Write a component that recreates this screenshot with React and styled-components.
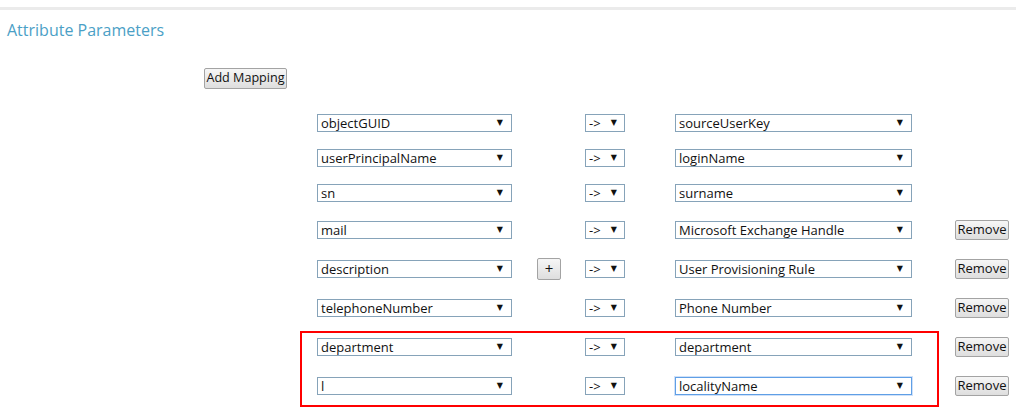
import React from "react";
import styled, { createGlobalStyle, css } from "styled-components";

const Global = createGlobalStyle`
  html, body { margin: 0; padding: 0; background: #fff; }
  body { font-family: "Open Sans", "Noto Sans", "Liberation Sans", sans-serif; color: #222; }
`;

const Page = styled.div`
  width: 1022px;
  height: 416px;
  overflow: hidden;
  padding-top: 7px;
  box-sizing: border-box;
`;

const TopRule = styled.div`
  height: 3px;
  width: 1016px;
  background: #ebebeb;
`;

const Title = styled.h2`
  margin: 10px 0 0 7px;
  font-size: 16px;
  line-height: 20px;
  font-weight: 400;
  color: #4b9fc6;
`;

const Toolbar = styled.div`
  margin: 28px 0 0 204px;
  height: 21px;
  display: flex;
`;

const Button = styled.button`
  font-family: "Open Sans", "Noto Sans", sans-serif;
  font-size: ${p => p.$fs || 13}px;
  color: #111;
  background: linear-gradient(#f6f6f6, #dedede);
  border: 1px solid #a3a3a3;
  border-radius: 2px;
  padding: 0;
  white-space: nowrap;
  height: ${p => p.$h || 20}px;
  width: ${p => p.$w}px;
  line-height: 1;
  cursor: pointer;
  box-sizing: border-box;
`;

const Table = styled.div`
  margin: 16px 0 0 300px;
  display: flex;
  flex-direction: column;
`;

const Row = styled.div`
  display: grid;
  grid-template-columns: 220px 48px 90px 280px 54px;
  align-items: center;
  padding-left: 17px;
  height: ${p => (p.$tall ? 39 : 35)}px;
`;

const Group = styled.div`
  position: relative;
`;

const Highlight = styled.div`
  position: absolute;
  left: 0;
  top: 4px;
  width: 639px;
  height: 76px;
  border: 2px solid #ff0000;
  box-sizing: border-box;
  pointer-events: none;
`;

const SelectWrap = styled.div`
  position: relative;
  width: ${p => p.$w}px;
  height: 18px;
  &::after {
    content: "▼";
    position: absolute;
    right: ${p => p.$arrowRight ?? 9}px;
    top: 5px;
    font-size: 8px;
    line-height: 8px;
    color: #111;
    pointer-events: none;
    font-family: "DejaVu Sans", sans-serif;
  }
`;

const Select = styled.select`
  display: block;
  appearance: none;
  -webkit-appearance: none;
  width: 100%;
  height: 18px;
  box-sizing: border-box;
  border: 1px solid #86a3b9;
  border-radius: 0;
  background: #fff;
  font-family: "Open Sans", "Noto Sans", sans-serif;
  font-size: 13px;
  color: #111;
  padding: 0 0 0 3px;
  line-height: 16px;
  outline: none;
  ${p =>
    p.$focused &&
    css`
      border-color: #5f9fe6;
      box-shadow: 0 0 0 1px rgba(120, 170, 235, 0.35);
    `}
`;

const Cell = styled.div`
  display: flex;
  align-items: center;
`;

const Drop = ({ w, value, focused, arrowRight }) => (
  <SelectWrap $w={w} $arrowRight={arrowRight}>
    <Select value={value} onChange={() => {}} $focused={focused}>
      <option value={value}>{value}</option>
    </Select>
  </SelectWrap>
);

const rows = [
  { src: "objectGUID", dst: "sourceUserKey" },
  { src: "userPrincipalName", dst: "loginName" },
  { src: "sn", dst: "surname" },
  { src: "mail", dst: "Microsoft Exchange Handle", remove: true },
  { src: "description", dst: "User Provisioning Rule", remove: true, plus: true },
  { src: "telephoneNumber", dst: "Phone Number", remove: true },
];

const highlighted = [
  { src: "department", dst: "department", remove: true },
  { src: "l", dst: "localityName", remove: true, focused: true },
];

const MappingRow = ({ r }) => (
  <Row $tall={r.remove}>
    <Cell>
      <Drop w={195} value={r.src} />
    </Cell>
    <Cell>
      {r.plus && (
        <Button $w={24} $h={22} $fs={15}>
          +
        </Button>
      )}
    </Cell>
    <Cell>
      <Drop w={40} value="->" arrowRight={8} />
    </Cell>
    <Cell>
      <Drop w={237} value={r.dst} focused={r.focused} />
    </Cell>
    <Cell>{r.remove && <Button $w={54}>Remove</Button>}</Cell>
  </Row>
);

export default function App() {
  return (
    <Page>
      <Global />
      <TopRule />
      <Title>Attribute Parameters</Title>
      <Toolbar>
        <Button $w={83} $h={21} $fs={12.6}>
          Add Mapping
        </Button>
      </Toolbar>
      <Table>
        {rows.map(r => (
          <MappingRow key={r.src} r={r} />
        ))}
        <Group>
          {highlighted.map(r => (
            <MappingRow key={r.src} r={r} />
          ))}
          <Highlight />
        </Group>
      </Table>
    </Page>
  );
}
